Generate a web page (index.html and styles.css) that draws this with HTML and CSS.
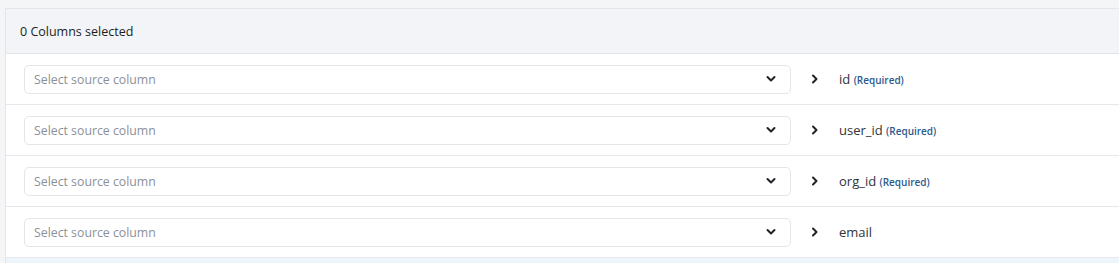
FILE: index.html
```html
<!DOCTYPE html>
<html lang="en">
<head>
    <meta charset="UTF-8">
    <title>Column mapping</title>
    <link rel="stylesheet" href="styles.css">
</head>
<body>
<section class="mapper">
    <div class="mapper-head">0 Columns selected</div>
    <div class="map-row">
        <div class="picker">
            <span>Select source column</span>
            <svg class="caret" width="12" height="8" viewBox="0 0 12 8"><path d="M2.5 2l3.5 3.5 3.5-3.5" fill="none" stroke="#1f2328" stroke-width="2" stroke-linecap="round" stroke-linejoin="round"/></svg>
        </div>
        <svg class="arrow" width="8" height="12" viewBox="0 0 8 12"><path d="M2 2.5l3.5 3.5-3.5 3.5" fill="none" stroke="#1f2328" stroke-width="2" stroke-linecap="round" stroke-linejoin="round"/></svg>
        <div class="field">id <small>(Required)</small></div>
    </div>
    <div class="map-row">
        <div class="picker">
            <span>Select source column</span>
            <svg class="caret" width="12" height="8" viewBox="0 0 12 8"><path d="M2.5 2l3.5 3.5 3.5-3.5" fill="none" stroke="#1f2328" stroke-width="2" stroke-linecap="round" stroke-linejoin="round"/></svg>
        </div>
        <svg class="arrow" width="8" height="12" viewBox="0 0 8 12"><path d="M2 2.5l3.5 3.5-3.5 3.5" fill="none" stroke="#1f2328" stroke-width="2" stroke-linecap="round" stroke-linejoin="round"/></svg>
        <div class="field">user_id <small>(Required)</small></div>
    </div>
    <div class="map-row">
        <div class="picker">
            <span>Select source column</span>
            <svg class="caret" width="12" height="8" viewBox="0 0 12 8"><path d="M2.5 2l3.5 3.5 3.5-3.5" fill="none" stroke="#1f2328" stroke-width="2" stroke-linecap="round" stroke-linejoin="round"/></svg>
        </div>
        <svg class="arrow" width="8" height="12" viewBox="0 0 8 12"><path d="M2 2.5l3.5 3.5-3.5 3.5" fill="none" stroke="#1f2328" stroke-width="2" stroke-linecap="round" stroke-linejoin="round"/></svg>
        <div class="field">org_id <small>(Required)</small></div>
    </div>
    <div class="map-row">
        <div class="picker">
            <span>Select source column</span>
            <svg class="caret" width="12" height="8" viewBox="0 0 12 8"><path d="M2.5 2l3.5 3.5 3.5-3.5" fill="none" stroke="#1f2328" stroke-width="2" stroke-linecap="round" stroke-linejoin="round"/></svg>
        </div>
        <svg class="arrow" width="8" height="12" viewBox="0 0 8 12"><path d="M2 2.5l3.5 3.5-3.5 3.5" fill="none" stroke="#1f2328" stroke-width="2" stroke-linecap="round" stroke-linejoin="round"/></svg>
        <div class="field">email</div>
    </div>
    <div class="next-strip"></div>
</section>
</body>
</html>
```

FILE: styles.css
```css
* {margin:0; padding:0; box-sizing:border-box;}
body {background:#f4f5f7; font-family:"Open Sans", "Noto Sans", sans-serif; padding:8px 0 0 5px;}
.mapper {background:#fff; border-left:1px solid #e3e5e9; border-top:1px solid #e3e5e9;}
.mapper-head {height:45px; display:flex; align-items:center; padding-left:14px; background:#f3f4f7; border-bottom:1px solid #e1e4e8; font-size:12.5px; font-weight:500; color:#1c1e21;}
.map-row {height:51px; display:flex; align-items:center; padding-left:18px; border-bottom:1px solid #e6e8eb;}
.picker {width:767px; height:29px; display:flex; align-items:center; justify-content:space-between; padding:0 13px 0 9px; border:1px solid #e3e5e9; border-radius:5px; font-size:12.3px; color:#8b9097;}
.arrow {margin-left:20px;}
.field {margin-left:20px; font-size:13px; color:#30343a;}
.field small {font-size:10px; font-weight:600; color:#2d5a8c;}
.next-strip {height:6px; background:#eef6fd;}
```
